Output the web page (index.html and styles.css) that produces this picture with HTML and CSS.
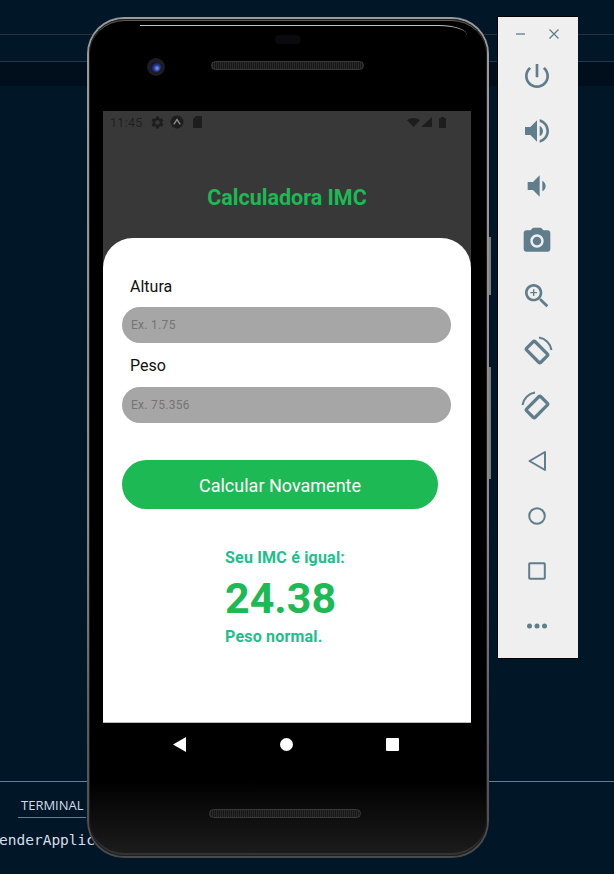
FILE: index.html
```html
<!DOCTYPE html>
<html lang="pt-BR">
<head>
    <meta charset="UTF-8">
    <meta name="viewport" content="width=device-width, initial-scale=1.0">
    <title>Calculadora IMC</title>
    <link rel="stylesheet" href="styles.css">
</head>
<body>
    <!-- editor behind the emulator -->
    <div class="ide">
        <div class="ide-tabs"></div>
        <div class="ide-crumbs"></div>
        <div class="ide-band"></div>
        <div class="ide-editor"></div>
        <div class="ide-panel">
            <div class="panel-tabs"><span class="panel-tab">TERMINAL</span></div>
            <div class="panel-output">enderApplication</div>
        </div>
    </div>

    <!-- phone frame -->
    <div class="phone">
        <div class="phone-glare"></div>
        <div class="btn-side btn-power"></div>
        <div class="btn-side btn-volume"></div>

        <div class="bezel-top">
            <div class="camera"><div class="lens"></div></div>
            <div class="speaker-col">
                <div class="earpiece"></div>
                <div class="speaker"></div>
            </div>
        </div>

        <div class="screen">
            <div class="app-header">
                <div class="status-bar">
                    <span class="status-time">11:45</span>
                    <svg class="st-gear" viewBox="0 0 24 24"><path d="M19.14 12.94c.04-.3.06-.61.06-.94s-.02-.64-.07-.94l2.03-1.58a.49.49 0 0 0 .12-.61l-1.92-3.32a.49.49 0 0 0-.59-.22l-2.39.96a7 7 0 0 0-1.62-.94l-.36-2.54a.48.48 0 0 0-.48-.41h-3.84a.47.47 0 0 0-.47.41l-.36 2.54c-.59.24-1.13.57-1.62.94l-2.39-.96a.49.49 0 0 0-.59.22L2.74 8.87a.48.48 0 0 0 .12.61l2.03 1.58c-.05.3-.09.63-.09.94s.02.64.07.94l-2.03 1.58a.49.49 0 0 0-.12.61l1.92 3.32c.12.22.37.29.59.22l2.39-.96c.5.38 1.03.7 1.62.94l.36 2.54c.05.24.24.41.48.41h3.84c.24 0 .44-.17.47-.41l.36-2.54c.59-.24 1.13-.56 1.62-.94l2.39.96c.22.08.47 0 .59-.22l1.92-3.32a.47.47 0 0 0-.12-.61l-2.01-1.58zM12 15.6A3.6 3.6 0 1 1 12 8.4a3.6 3.6 0 0 1 0 7.2z"/></svg>
                    <svg class="st-expo" viewBox="0 0 14 14"><circle cx="7" cy="7" r="6.5"/><path class="st-expo-mark" d="M3.8 9.4 7 4.6l3.2 4.8"/></svg>
                    <svg class="st-sd" viewBox="0 0 9 12"><path d="M3 0h5a1 1 0 0 1 1 1v10a1 1 0 0 1-1 1H1a1 1 0 0 1-1-1V3z"/></svg>
                    <span class="status-fill"></span>
                    <svg class="st-wifi" viewBox="0 0 13 9"><path d="M0 2.2C1.8.8 4 0 6.5 0S11.2.8 13 2.2L6.5 9z"/></svg>
                    <svg class="st-signal" viewBox="0 0 11 10"><path d="M11 0v10H0z"/></svg>
                    <svg class="st-battery" viewBox="0 0 7 11"><path d="M2 0h3v1h1.2c.4 0 .8.4.8.8v8.4c0 .4-.4.8-.8.8H.8c-.4 0-.8-.4-.8-.8V1.800C0 1.400.4 1 .8 1H2z"/></svg>
                </div>
                <h1 class="app-title">Calculadora IMC</h1>
            </div>

            <div class="card">
                <label class="field-label">Altura</label>
                <div class="field-input">Ex. 1.75</div>
                <label class="field-label label-peso">Peso</label>
                <div class="field-input">Ex. 75.356</div>
                <button class="btn-calc">Calcular Novamente</button>
                <div class="result">
                    <div class="result-caption">Seu IMC é igual:</div>
                    <div class="result-value">24.38</div>
                    <div class="result-caption result-status">Peso normal.</div>
                </div>
            </div>
        </div>

        <div class="nav-bar">
            <svg class="nav-icon" viewBox="0 0 13 15"><path d="M13 0v15L0 7.500z"/></svg>
            <div class="nav-circle"></div>
            <div class="nav-square"></div>
        </div>
        <div class="speaker speaker-bottom"></div>
    </div>

    <!-- emulator toolbar -->
    <div class="toolbar">
        <div class="toolbar-head">
            <svg class="win-icon" viewBox="0 0 12 12"><path d="M1 6h9"/></svg>
            <svg class="win-icon" viewBox="0 0 12 12"><path d="M1.500 1.500l9 9M10.500 1.500l-9 9"/></svg>
        </div>
        <div class="tool"><svg class="tool-icon" viewBox="0 0 24 24"><path d="M13 3h-2v10h2V3zm4.830 2.170l-1.420 1.420C17.990 7.860 19 9.810 19 12c0 3.870-3.130 7-7 7s-7-3.130-7-7c0-2.190 1.010-4.140 2.580-5.420L6.170 5.170C4.230 6.820 3 9.260 3 12c0 4.970 4.030 9 9 9s9-4.030 9-9c0-2.740-1.230-5.180-3.170-6.830z"/></svg></div>
        <div class="tool"><svg class="tool-icon" viewBox="0 0 24 24"><path d="M3 9v6h4l5 5V4L7 9H3zm13.500 3c0-1.770-1.020-3.290-2.500-4.030v8.050c1.480-.73 2.500-2.250 2.500-4.020zM14 3.230v2.060c2.890.86 5 3.540 5 6.710s-2.110 5.850-5 6.710v2.060c4.010-.91 7-4.490 7-8.770s-2.990-7.860-7-8.770z"/></svg></div>
        <div class="tool"><svg class="tool-icon" viewBox="0 0 24 24"><path d="M18.500 12c0-1.770-1.020-3.290-2.500-4.030v8.050c1.480-.73 2.500-2.250 2.500-4.020zM5 9v6h4l5 5V4L9 9H5z"/></svg></div>
        <div class="tool"><svg class="tool-icon" viewBox="0 0 24 24"><circle cx="12" cy="12" r="3.200"/><path d="M9 2L7.170 4H4c-1.100 0-2 .9-2 2v12c0 1.100.9 2 2 2h16c1.100 0 2-.9 2-2V6c0-1.100-.9-2-2-2h-3.170L15 2H9zm3 15c-2.760 0-5-2.240-5-5s2.240-5 5-5 5 2.240 5 5-2.240 5-5 5z"/></svg></div>
        <div class="tool"><svg class="tool-icon" viewBox="0 0 24 24"><path d="M15.500 14h-.79l-.28-.27C15.410 12.590 16 11.110 16 9.500 16 5.910 13.090 3 9.500 3S3 5.910 3 9.500 5.910 16 9.500 16c1.610 0 3.090-.59 4.230-1.570l.27.28v.79l5 4.990L20.490 19l-4.990-5zm-6 0C7.010 14 5 11.990 5 9.500S7.010 5 9.500 5 14 7.010 14 9.500 11.990 14 9.500 14z"/><path d="M12 10h-2v2H9v-2H7V9h2V7h1v2h2v1z"/></svg></div>
        <div class="tool">
            <svg class="tool-icon" viewBox="0 0 32 32"><rect class="rot-body" x="10" y="7" width="12" height="20" rx="1.500" transform="rotate(-45 16 17)"/><path class="rot-arc" d="M18 2.500A15 15 0 0 1 30.500 15"/></svg>
        </div>
        <div class="tool">
            <svg class="tool-icon flip" viewBox="0 0 32 32"><rect class="rot-body" x="10" y="7" width="12" height="20" rx="1.500" transform="rotate(-45 16 17)"/><path class="rot-arc" d="M18 2.500A15 15 0 0 1 30.500 15"/></svg>
        </div>
        <div class="tool"><svg class="tool-icon" viewBox="0 0 32 32"><path class="line-icon" d="M24 7v18L8.500 16z"/></svg></div>
        <div class="tool"><svg class="tool-icon" viewBox="0 0 32 32"><circle class="line-icon" cx="16" cy="16" r="7.800"/></svg></div>
        <div class="tool"><svg class="tool-icon" viewBox="0 0 32 32"><rect class="line-icon" x="8.200" y="8.200" width="15.600" height="15.600" rx=".8"/></svg></div>
        <div class="tool"><svg class="tool-icon" viewBox="0 0 32 32"><circle cx="8.500" cy="16" r="2.500"/><circle cx="16" cy="16" r="2.500"/><circle cx="23.500" cy="16" r="2.500"/></svg></div>
    </div>
</body>
</html>
```

FILE: styles.css
```css
* {
    box-sizing: border-box;
}

html, body {
    margin: 0;
    padding: 0;
    height: 100%;
}

body {
    position: relative;
    width: 614px;
    height: 874px;
    overflow: hidden;
    background-color: #011627;
    font-family: Roboto, sans-serif;
}

/* editor */
.ide {
    display: flex;
    flex-direction: column;
    height: 100%;
}

.ide-tabs {
    height: 35px;
    border-bottom: 1px solid #2b3040;
}

.ide-crumbs {
    height: 27px;
    border-bottom: 1px solid #1d3a52;
}

.ide-band {
    height: 24px;
    background-color: #010f1c;
}

.ide-editor {
    flex: 1;
}

.ide-panel {
    height: 93px;
    border-top: 1px solid #5f7e97;
    padding-top: 15px;
}

.panel-tabs {
    margin-left: 18px;
    width: 68px;
    height: 21px;
    border-bottom: 1px solid #5f7e97;
    padding-left: 3px;
}

.panel-tab {
    display: block;
    font-family: "Open Sans", sans-serif;
    font-size: 13px;
    line-height: 16px;
    color: #d2dee7;
}

.panel-output {
    margin-top: 13px;
    margin-left: -1px;
    font-family: "DejaVu Sans Mono", monospace;
    font-size: 14.500px;
    line-height: 18px;
    color: #d6deeb;
}

/* phone */
.phone {
    position: absolute;
    left: 87px;
    top: 17px;
    width: 402px;
    height: 841px;
    border: 2px solid transparent;
    border-radius: 37px;
    background:
        linear-gradient(#000 91%, #1d1d1d 100%) padding-box,
        linear-gradient(#9a9a9a, #8a8a8a 60%, #5c5c5c 85%, #4a4a4a) border-box;
    box-shadow: inset 0 0 0 1px #1e1e1e, inset 0 2px 0 #5a5a5a, inset 0 -3px 0 #333;
}

.phone-glare {
    position: absolute;
    top: 6px;
    left: 51px;
    right: 20px;
    height: 10px;
    border-top: 1px solid #c0c0c0;
    border-radius: 0 28px 0 0 / 0 10px 0 0;
}

.btn-side {
    position: absolute;
    right: -4px;
    width: 2px;
    background-color: #7d7d7d;
}

.btn-power {
    top: 218px;
    height: 58px;
}

.btn-volume {
    top: 348px;
    height: 112px;
}

.bezel-top {
    display: flex;
    height: 92px;
    padding-left: 58px;
}

.camera {
    display: flex;
    align-items: center;
    justify-content: center;
    width: 18px;
    height: 18px;
    margin-top: 39px;
    border-radius: 50%;
    background-color: #1c1c22;
}

.lens {
    width: 10px;
    height: 10px;
    border-radius: 50%;
    background: radial-gradient(circle at 60% 62%, #8fa2f5 0, #2a3a9a 35%, #050816 80%);
}

.speaker-col {
    display: flex;
    flex-direction: column;
    align-items: center;
    margin-left: 46px;
    padding-top: 16px;
}

.earpiece {
    width: 26px;
    height: 9px;
    margin-bottom: 17px;
    border-radius: 5px;
    background-color: #0a0a0e;
}

.speaker {
    width: 153px;
    height: 9px;
    border: 1px solid #3a3a3a;
    border-radius: 5px;
    background: repeating-linear-gradient(90deg, #2a2a2a 0 1px, #161616 1px 2px);
}

.speaker-bottom {
    width: 152px;
    margin-top: 44px;
    margin-left: 120px;
}

.screen {
    display: flex;
    flex-direction: column;
    width: 368px;
    height: 612px;
    margin-left: 14px;
    border-bottom: 1px solid #bdbdbd;
    background-color: #383838;
}

.app-header {
    height: 127px;
    flex-shrink: 0;
}

.status-bar {
    display: flex;
    align-items: center;
    height: 22px;
    padding: 0 25px 0 7px;
    fill: #1d1d1d;
}

.status-time {
    width: 40px;
    font-size: 12.500px;
    letter-spacing: .3px;
    color: #202020;
}

.st-gear {
    width: 15px;
    height: 15px;
}

.st-expo {
    width: 14px;
    height: 14px;
    margin-left: 5px;
}

.st-expo-mark {
    fill: none;
    stroke: #8a8a8a;
    stroke-width: 1.400;
}

.st-sd {
    width: 9px;
    height: 12px;
    margin-left: 9px;
}

.status-fill {
    flex: 1;
}

.st-wifi {
    width: 13px;
    height: 9px;
}

.st-signal {
    width: 11px;
    height: 10px;
    margin-left: 1px;
}

.st-battery {
    width: 7px;
    height: 11px;
    margin-left: 7px;
}

.app-title {
    margin: 53px 0 0;
    font-size: 21.500px;
    line-height: 24px;
    font-weight: 700;
    text-align: center;
    color: #1db954;
}

.card {
    flex: 1;
    padding: 39px 20px 0 19px;
    border-radius: 30px 30px 0 0;
    background-color: #fff;
}

.field-label {
    display: block;
    height: 21px;
    margin-left: 8px;
    font-size: 16px;
    line-height: 19px;
    color: #111;
}

.label-peso {
    margin-top: 13px;
}

.field-input {
    height: 36px;
    margin-top: 9px;
    padding-left: 9px;
    border-radius: 18px;
    background-color: #a6a6a6;
    font-size: 12px;
    line-height: 37px;
    letter-spacing: .3px;
    color: #747474;
}

.label-peso + .field-input {
    margin-top: 10px;
}

.btn-calc {
    display: block;
    width: 316px;
    height: 49px;
    margin-top: 37px;
    padding: 1px 0 0;
    border: 0;
    border-radius: 25px;
    background-color: #1db954;
    font-family: Roboto, sans-serif;
    font-size: 18px;
    color: #fff;
}

.result {
    margin-top: 38px;
    margin-left: 103px;
}

.result-caption {
    font-size: 16px;
    line-height: 22px;
    font-weight: 700;
    letter-spacing: .2px;
    color: #1dbf8a;
}

.result-value {
    margin-top: 3px;
    font-size: 43px;
    line-height: 52px;
    font-weight: 700;
    color: #1db954;
}

.result-status {
    margin-top: 2px;
}

.nav-bar {
    display: flex;
    align-items: center;
    gap: 93.500px;
    height: 42px;
    padding-left: 84px;
}

.nav-icon {
    width: 13px;
    height: 15px;
    fill: #fff;
}

.nav-circle {
    width: 13px;
    height: 13px;
    border-radius: 50%;
    background-color: #fff;
}

.nav-square {
    width: 13px;
    height: 13px;
    border-radius: 1px;
    background-color: #fff;
}

/* toolbar */
.toolbar {
    position: absolute;
    left: 497px;
    top: 16px;
    display: flex;
    flex-direction: column;
    align-items: center;
    width: 81px;
    height: 643px;
    padding-right: 2px;
    border: 1px solid #000;
    border-right: 0;
    background-color: #efefef;
}

.toolbar-head {
    display: flex;
    justify-content: center;
    gap: 21px;
    width: 100%;
    height: 31px;
    padding-top: 11px;
}

.win-icon {
    width: 12px;
    height: 12px;
    fill: none;
    stroke: #607d8b;
    stroke-width: 1.300;
}

.tool {
    display: flex;
    flex-shrink: 0;
    align-items: center;
    justify-content: center;
    height: 55px;
    fill: #607d8b;
}

.tool-icon {
    width: 32px;
    height: 32px;
}

.flip {
    transform: scaleX(-1);
}

.rot-body {
    fill: none;
    stroke: #607d8b;
    stroke-width: 3.200;
}

.rot-arc {
    fill: none;
    stroke: #607d8b;
    stroke-width: 2;
}

.line-icon {
    fill: none;
    stroke: #607d8b;
    stroke-width: 2;
    stroke-linejoin: round;
}
```
